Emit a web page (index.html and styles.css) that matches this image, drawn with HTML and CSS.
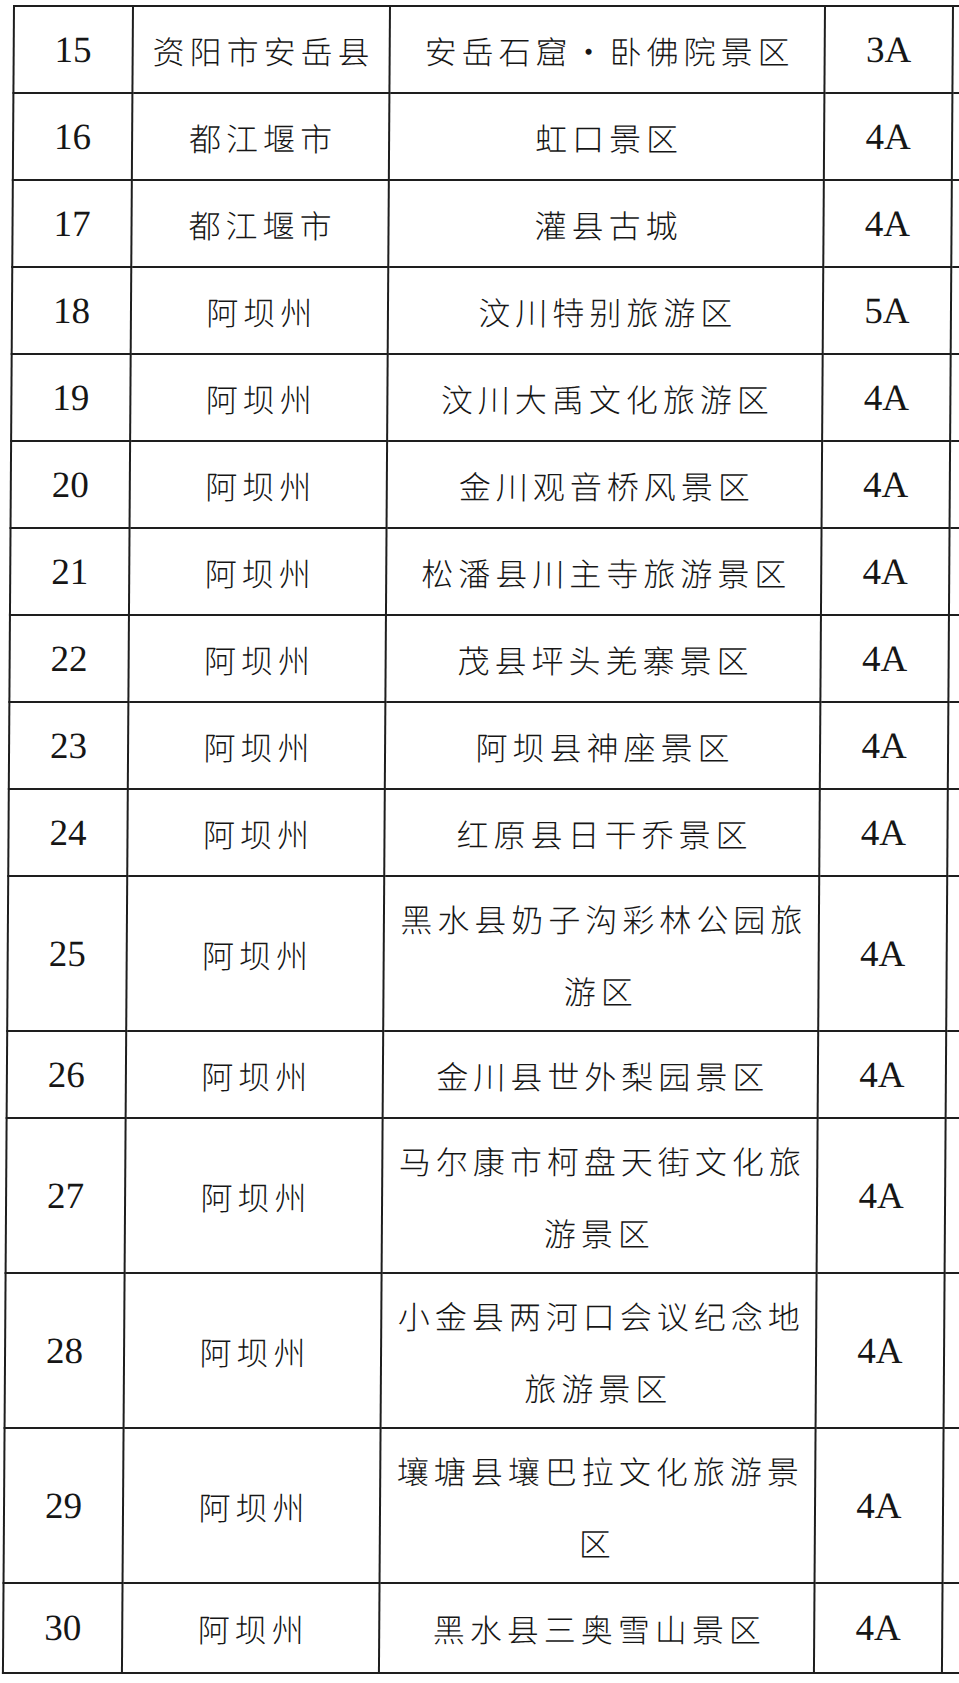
FILE: index.html
```html
<!DOCTYPE html>
<html lang="zh-CN">
<head>
<meta charset="utf-8">
<title>景区名单</title>
<link rel="stylesheet" href="styles.css">
</head>
<body>
<div class="page">
<table class="list">
<colgroup>
<col class="c-no"><col class="c-area"><col class="c-name"><col class="c-level"><col class="c-extra">
</colgroup>
<tbody>
<tr class="r1"><td class="num">15</td><td class="cjk">资阳市安岳县</td><td class="cjk">安岳石窟・卧佛院景区</td><td class="num">3A</td><td></td></tr>
<tr class="r1"><td class="num">16</td><td class="cjk">都江堰市</td><td class="cjk">虹口景区</td><td class="num">4A</td><td></td></tr>
<tr class="r1"><td class="num">17</td><td class="cjk">都江堰市</td><td class="cjk">灌县古城</td><td class="num">4A</td><td></td></tr>
<tr class="r1"><td class="num">18</td><td class="cjk">阿坝州</td><td class="cjk">汶川特别旅游区</td><td class="num">5A</td><td></td></tr>
<tr class="r1"><td class="num">19</td><td class="cjk">阿坝州</td><td class="cjk">汶川大禹文化旅游区</td><td class="num">4A</td><td></td></tr>
<tr class="r1"><td class="num">20</td><td class="cjk">阿坝州</td><td class="cjk">金川观音桥风景区</td><td class="num">4A</td><td></td></tr>
<tr class="r1"><td class="num">21</td><td class="cjk">阿坝州</td><td class="cjk">松潘县川主寺旅游景区</td><td class="num">4A</td><td></td></tr>
<tr class="r1"><td class="num">22</td><td class="cjk">阿坝州</td><td class="cjk">茂县坪头羌寨景区</td><td class="num">4A</td><td></td></tr>
<tr class="r1"><td class="num">23</td><td class="cjk">阿坝州</td><td class="cjk">阿坝县神座景区</td><td class="num">4A</td><td></td></tr>
<tr class="r1"><td class="num">24</td><td class="cjk">阿坝州</td><td class="cjk">红原县日干乔景区</td><td class="num">4A</td><td></td></tr>
<tr class="r2"><td class="num">25</td><td class="cjk">阿坝州</td><td class="cjk">黑水县奶子沟彩林公园旅<br>游区</td><td class="num">4A</td><td></td></tr>
<tr class="r1"><td class="num">26</td><td class="cjk">阿坝州</td><td class="cjk">金川县世外梨园景区</td><td class="num">4A</td><td></td></tr>
<tr class="r2"><td class="num">27</td><td class="cjk">阿坝州</td><td class="cjk">马尔康市柯盘天街文化旅<br>游景区</td><td class="num">4A</td><td></td></tr>
<tr class="r2"><td class="num">28</td><td class="cjk">阿坝州</td><td class="cjk">小金县两河口会议纪念地<br>旅游景区</td><td class="num">4A</td><td></td></tr>
<tr class="r2"><td class="num">29</td><td class="cjk">阿坝州</td><td class="cjk">壤塘县壤巴拉文化旅游景<br>区</td><td class="num">4A</td><td></td></tr>
<tr class="r3"><td class="num">30</td><td class="cjk">阿坝州</td><td class="cjk">黑水县三奥雪山景区</td><td class="num">4A</td><td></td></tr>
</tbody>
</table>
</div>
</body>
</html>
```
FILE: styles.css
```css
html, body {
  margin: 0;
  padding: 0;
  background: #ffffff;
}
body {
  width: 959px;
  height: 1683px;
  overflow: hidden;
}
.page {
  padding: 5px 0 0 13px;
}
.list {
  border-collapse: collapse;
  table-layout: fixed;
  width: 1040px;
  color: #161616;
  transform: skewX(-0.38deg);
  transform-origin: 0 0;
}
.c-no { width: 119px; }
.c-area { width: 257px; }
.c-name { width: 435px; }
.c-level { width: 128px; }
.c-extra { width: 101px; }
.list td {
  border: 2px solid #1e1e1e;
  padding: 0;
  text-align: center;
  vertical-align: middle;
}
.list td:last-child {
  border-right: none;
}
.r1 { height: 87px; }
.r2 { height: 155px; }
.r3 { height: 90px; }
.num {
  font-family: "Liberation Serif", "Times New Roman", serif;
  font-size: 37px;
  line-height: 40px;
}
.cjk {
  font-family: "Noto Sans CJK SC", sans-serif;
  font-weight: 300;
  font-size: 32px;
  letter-spacing: 5px;
  text-indent: 5px;
  line-height: 72px;
}
```
